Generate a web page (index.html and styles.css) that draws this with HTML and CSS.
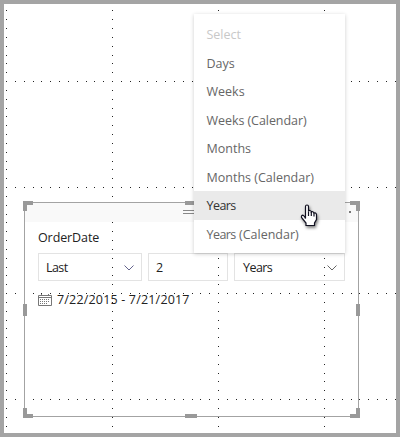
FILE: index.html
```html
<!DOCTYPE html>
<html lang="en">
<head>
<meta charset="utf-8">
<title>Relative date slicer</title>
<link rel="stylesheet" href="styles.css">
</head>
<body>
<main class="canvas">
  <section class="card">
    <div class="card-header"></div>
    <div class="card-body">
      <h1 class="title">OrderDate</h1>
      <div class="fields">
        <div class="field"><span class="tight">Last</span><svg class="chevron chevron-blue" width="10" height="6" viewBox="0 0 10 6"><path d="M.5.5 5 5 9.5.5"/></svg></div>
        <div class="field"><span>2</span></div>
        <div class="field field-unit"><span class="tight">Years</span><svg class="chevron" width="10" height="6" viewBox="0 0 10 6"><path d="M.5.5 5 5 9.5.5"/></svg></div>
      </div>
      <div class="range">
        <svg class="calendar" width="14" height="12" viewBox="0 0 14 12">
          <path class="cal-frame" d="M.5 1.5h13v10H.5zM.5 3.5h13M3.5 0v2M10.5 0v2"/>
          <path class="cal-days" d="M2 5.5h10M2 7.5h10M2 9.5h8"/>
        </svg>
        <span>7/22/2015 - 7/21/2017</span>
      </div>
    </div>
  </section>

  <svg class="grid-dots" width="400" height="437" shape-rendering="crispEdges">
    <defs>
      <pattern id="col" x="6" y="10" width="106" height="53" patternUnits="userSpaceOnUse">
        <path d="M0 0h1v1H0zM0 9h1v1H0zM0 18h1v1H0zM0 27h1v1H0zM0 36h1v1H0zM0 45h1v1H0z"/>
      </pattern>
      <pattern id="row" x="-12" y="81" width="53" height="106" patternUnits="userSpaceOnUse">
        <path d="M0 0h1v1H0zM9 0h1v1H9zM18 0h1v1H18zM27 0h1v1H27zM36 0h1v1H36zM45 0h1v1H45z"/>
      </pattern>
    </defs>
    <rect x="4" y="8" width="392" height="425" fill="url(#col)"/>
    <rect x="4" y="8" width="392" height="425" fill="url(#row)"/>
  </svg>

  <svg class="selection" width="337" height="217" viewBox="23 201 337 217" shape-rendering="crispEdges">
    <path class="header-bar" d="M25 203h333v19H25z"/>
    <path class="outline" d="M24.5 202.5h334v214h-334z"/>
    <path class="handles" d="M23 201h10v4h-6v6h-4zM350 201h10v10h-4v-6h-6zM23 408h4v6h6v4H23zM356 408h4v10h-10v-4h6zM185 201h12v4h-12zM185 414h12v4h-12zM23 304h4v12h-4zM356 304h4v12h-4z"/>
    <path class="grip" d="M183 210.5h11M183 213.5h11"/>
    <path class="more" d="M349 211h2v2h-2z"/>
  </svg>

  <ul class="menu">
    <li class="disabled">Select</li>
    <li>Days</li>
    <li>Weeks</li>
    <li class="snug">Weeks (Calendar)</li>
    <li>Months</li>
    <li>Months (Calendar)</li>
    <li class="active"><span class="tight">Years</span></li>
    <li><span class="tight">Years</span> (Calendar)</li>
  </ul>

  <svg class="cursor" width="18" height="23" viewBox="0 0 18 23">
    <path d="M5.5 14.5V2.500Q5.500 1 7 1T8.500 2.500V7.500Q8.700 6.300 10 6.500 11.200 6.700 11.300 8 12.800 7 14 9 15.800 8.200 16.500 10.500V15.500L14.500 19V21.500H6V19L1.500 13.500Q1 11.300 3 11.200 4.500 11.800 5.500 14.500Z"/>
    <path class="fingers" d="M8.500 7.500v4.500M11.300 8v4M14 9v3.500"/>
  </svg>
</main>
</body>
</html>
```

FILE: styles.css
```css
* { box-sizing: border-box; }
body {
  margin: 0;
  font: 12.5px/18px "Open Sans", "Noto Sans", sans-serif;
  color: #222;
}
.canvas {
  position: relative;
  width: 400px;
  height: 437px;
  border: 4px solid #a4a4a4;
  background: #fff;
  overflow: hidden;
}
.card {
  width: 335px;
  height: 215px;
  margin: 198px 0 0 20px;
}
.card-header { height: 20px; }
.card-body { padding: 6px 14px 0; }
.title {
  margin: 0;
  font: inherit;
  height: 25px;
  line-height: 20px;
  letter-spacing: -.1px;
}
.fields {
  display: grid;
  grid-template-columns: 104px 80px 111px;
  gap: 6px;
}
.field {
  display: flex;
  align-items: center;
  justify-content: space-between;
  height: 28px;
  padding: 1px 7px 0;
  border: 1px solid #e3e3e3;
}
.field-unit { padding-left: 8px; }
.tight { letter-spacing: -.55px; }
.snug { letter-spacing: -.06px; }
.chevron {
  fill: none;
  stroke: #666;
}
.chevron-blue { stroke: #63638c; }
.range {
  display: flex;
  align-items: center;
  gap: 5px;
  height: 18px;
  margin-top: 10px;
  letter-spacing: .18px;
}
.calendar {
  fill: none;
  stroke: #777;
}
.cal-days { stroke-dasharray: 1 1; }
.range span { white-space: nowrap; }
.grid-dots {
  position: absolute;
  top: -4px;
  left: -4px;
  fill: #222;
}
.selection {
  position: absolute;
  top: 197px;
  left: 19px;
  fill: none;
}
.header-bar { fill: #f9f9f9; }
.outline { stroke: #a3a3a3; }
.handles { fill: #999; }
.grip { stroke: #888; }
.more { fill: #777; }
.menu {
  position: absolute;
  top: 10px;
  left: 190px;
  width: 151px;
  height: 239px;
  margin: 0;
  padding: 6px 0 0;
  list-style: none;
  background: #fff;
  box-shadow: 0 1px 4px rgba(0, 0, 0, .2);
  color: #666;
}
.menu li {
  height: 28.5px;
  padding-left: 12.5px;
  line-height: 30px;
  white-space: nowrap;
}
.menu .disabled { color: #c8c8c8; }
.menu .active {
  background: #eaeaea;
  color: #333;
}
.cursor {
  position: absolute;
  top: 200px;
  left: 296px;
  overflow: visible;
  fill: #fff;
  stroke: #101020;
  stroke-width: 1.2;
  filter: drop-shadow(1px 2px 1.5px rgba(0, 0, 0, .5));
}
.fingers { fill: none; }
```
